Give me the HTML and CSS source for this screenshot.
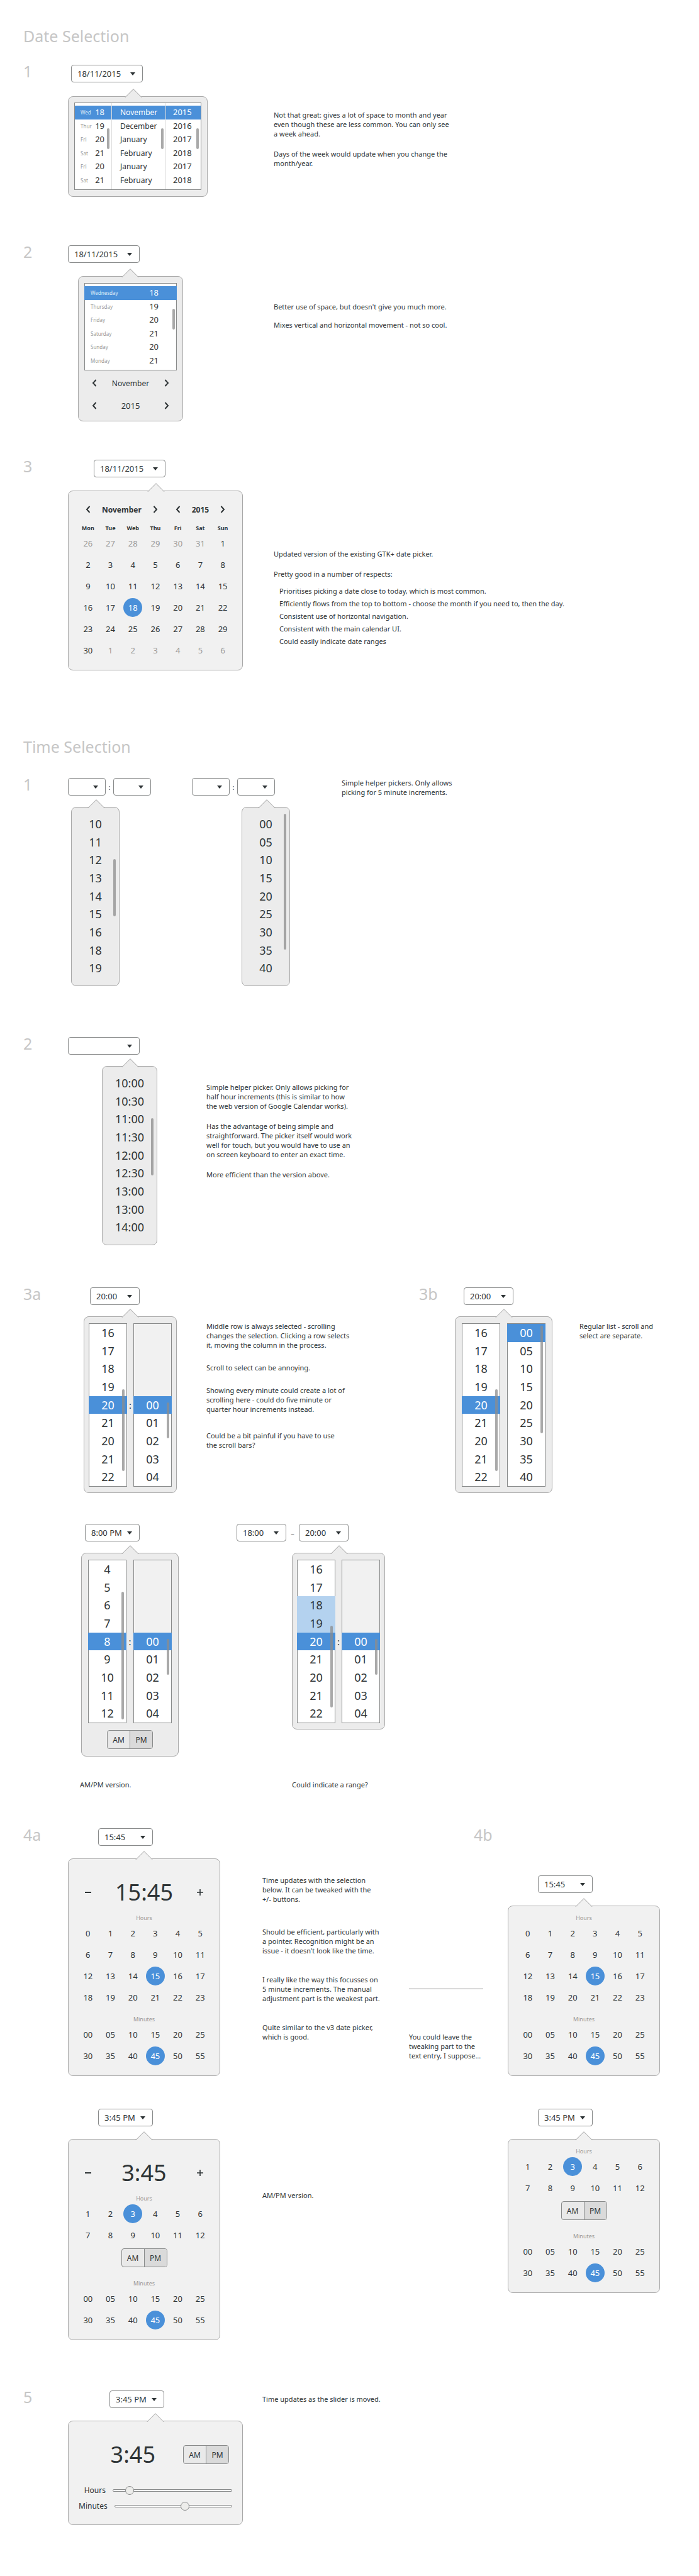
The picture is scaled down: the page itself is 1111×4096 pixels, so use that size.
FILE: index.html
```html
<!DOCTYPE html>
<html lang="en">
<head>
<meta charset="utf-8">
<title>Date and time selection</title>
<link rel="stylesheet" href="styles.css">
</head>
<body>
<svg class="symbols" aria-hidden="true">
  <symbol id="prev" viewBox="0 0 8 12"><path d="M6.5 1 2 6l4.500 5" fill="none" stroke="currentColor" stroke-width="2"/></symbol>
  <symbol id="next" viewBox="0 0 8 12"><path d="M1.500 1 6 6l-4.500 5" fill="none" stroke="currentColor" stroke-width="2"/></symbol>
  <symbol id="minus" viewBox="0 0 10 10"><path d="M0 5h10" stroke="currentColor" stroke-width="2"/></symbol>
  <symbol id="plus" viewBox="0 0 10 10"><path d="M0 5h10M5 0v10" stroke="currentColor" stroke-width="1.600"/></symbol>
</svg>

<main>
<section class="chapter">
  <h1>Date Selection</h1>

  <article class="study study-date">
    <h2>1</h2>
    <div class="picker date-columns">
      <span class="combo wide"><select aria-label="Date"><option>18/11/2015</option></select></span>
      <div class="popover">
        <div class="sheet">
          <ul class="column">
            <li class="on"><small>Wed</small>18</li><li><small>Thur</small>19</li><li><small>Fri</small>20</li><li><small>Sat</small>21</li><li><small>Fri</small>20</li><li><small>Sat</small>21</li>
            <li class="bar" style="top:40px;height:33px"></li>
          </ul>
          <ul class="column months">
            <li class="on">November</li><li>December</li><li>January</li><li>February</li><li>January</li><li>February</li>
            <li class="bar" style="top:40px;height:33px"></li>
          </ul>
          <ul class="column years">
            <li class="on">2015</li><li>2016</li><li>2017</li><li>2018</li><li>2017</li><li>2018</li>
            <li class="bar" style="top:40px;height:33px"></li>
          </ul>
        </div>
      </div>
    </div>
    <div class="notes">
      <p>Not that great: gives a lot of space to month and year<br>even though these are less common. You can only see<br>a week ahead.</p>
      <p>Days of the week would update when you change the<br>month/year.</p>
    </div>
  </article>

  <article class="study study-date second">
    <h2>2</h2>
    <div class="picker date-list">
      <span class="combo wide"><select aria-label="Date"><option>18/11/2015</option></select></span>
      <div class="popover">
        <div class="sheet">
          <ul class="column days">
            <li class="on"><small>Wednesday</small>18</li><li><small>Thursday</small>19</li><li><small>Friday</small>20</li><li><small>Saturday</small>21</li><li><small>Sunday</small>20</li><li><small>Monday</small>21</li>
            <li class="bar" style="top:40px;height:33px"></li>
          </ul>
        </div>
        <div class="stepper">
          <button aria-label="Previous month"><svg class="chevron"><use href="#prev"/></svg></button>
          <span>November</span>
          <button aria-label="Next month"><svg class="chevron"><use href="#next"/></svg></button>
        </div>
        <div class="stepper">
          <button aria-label="Previous year"><svg class="chevron"><use href="#prev"/></svg></button>
          <span class="digits">2015</span>
          <button aria-label="Next year"><svg class="chevron"><use href="#next"/></svg></button>
        </div>
      </div>
    </div>
    <div class="notes">
      <p>Better use of space, but doesn't give you much more.</p>
      <p>Mixes vertical and horizontal movement - not so cool.</p>
    </div>
  </article>

  <article class="study study-date third">
    <h2>3</h2>
    <div class="picker calendar">
      <span class="combo wide"><select aria-label="Date"><option>18/11/2015</option></select></span>
      <div class="popover pale">
        <div class="month-nav">
          <button aria-label="Previous month"><svg class="chevron"><use href="#prev"/></svg></button>
          <strong class="month">November</strong>
          <button aria-label="Next month"><svg class="chevron"><use href="#next"/></svg></button>
          <button aria-label="Previous year"><svg class="chevron"><use href="#prev"/></svg></button>
          <strong>2015</strong>
          <button aria-label="Next year"><svg class="chevron"><use href="#next"/></svg></button>
        </div>
        <table class="month-table">
          <thead><tr><th>Mon</th><th>Tue</th><th>Web</th><th>Thu</th><th>Fri</th><th>Sat</th><th>Sun</th></tr></thead>
          <tbody>
            <tr><td><button class="out">26</button></td><td><button class="out">27</button></td><td><button class="out">28</button></td><td><button class="out">29</button></td><td><button class="out">30</button></td><td><button class="out">31</button></td><td><button>1</button></td></tr>
            <tr><td><button>2</button></td><td><button>3</button></td><td><button>4</button></td><td><button>5</button></td><td><button>6</button></td><td><button>7</button></td><td><button>8</button></td></tr>
            <tr><td><button>9</button></td><td><button>10</button></td><td><button>11</button></td><td><button>12</button></td><td><button>13</button></td><td><button>14</button></td><td><button>15</button></td></tr>
            <tr><td><button>16</button></td><td><button>17</button></td><td><button class="picked">18</button></td><td><button>19</button></td><td><button>20</button></td><td><button>21</button></td><td><button>22</button></td></tr>
            <tr><td><button>23</button></td><td><button>24</button></td><td><button>25</button></td><td><button>26</button></td><td><button>27</button></td><td><button>28</button></td><td><button>29</button></td></tr>
            <tr><td><button>30</button></td><td><button class="out">1</button></td><td><button class="out">2</button></td><td><button class="out">3</button></td><td><button class="out">4</button></td><td><button class="out">5</button></td><td><button class="out">6</button></td></tr>
          </tbody>
        </table>
      </div>
    </div>
    <div class="notes">
      <p>Updated version of the existing GTK+ date picker.</p>
      <p>Pretty good in a number of respects:</p>
      <ul>
        <li>Prioritises picking a date close to today, which is most common.</li>
        <li>Efficiently flows from the top to bottom - choose the month if you need to, then the day.</li>
        <li>Consistent use of horizontal navigation.</li>
        <li>Consistent with the main calendar UI.</li>
        <li>Could easily indicate date ranges</li>
      </ul>
    </div>
  </article>
</section>

<section class="chapter time">
  <h1>Time Selection</h1>

  <article class="study study-helpers">
    <h2>1</h2>
    <div class="picker hours-menu">
      <div class="combos">
        <span class="combo small"><select aria-label="Hour"><option></option></select></span>
        <span class="sep">:</span>
        <span class="combo small"><select aria-label="Minute"><option></option></select></span>
      </div>
      <div class="popover">
        <ul class="menu"><li>10</li><li>11</li><li>12</li><li>13</li><li>14</li><li>15</li><li>16</li><li>18</li><li>19</li></ul>
        <span class="bar" style="top:82px;height:91px"></span>
      </div>
    </div>
    <div class="picker minutes-menu">
      <div class="combos">
        <span class="combo small"><select aria-label="Hour"><option></option></select></span>
        <span class="sep">:</span>
        <span class="combo small"><select aria-label="Minute"><option></option></select></span>
      </div>
      <div class="popover">
        <ul class="menu"><li>00</li><li>05</li><li>10</li><li>15</li><li>20</li><li>25</li><li>30</li><li>35</li><li>40</li></ul>
        <span class="bar" style="top:10px;height:216px"></span>
      </div>
    </div>
    <div class="notes">
      <p>Simple helper pickers. Only allows<br>picking for 5 minute increments.</p>
    </div>
  </article>

  <article class="study study-half">
    <h2>2</h2>
    <div class="picker half-menu">
      <span class="combo wide"><select aria-label="Time"><option></option></select></span>
      <div class="popover">
        <ul class="menu"><li>10:00</li><li>10:30</li><li>11:00</li><li>11:30</li><li>12:00</li><li>12:30</li><li>13:00</li><li>13:00</li><li>14:00</li></ul>
        <span class="bar" style="top:82px;height:91px"></span>
      </div>
    </div>
    <div class="notes">
      <p>Simple helper picker. Only allows picking for<br>half hour increments (this is similar to how<br>the web version of Google Calendar works).</p>
      <p>Has the advantage of being simple and<br>straightforward. The picker itself would work<br>well for touch, but you would have to use an<br>on screen keyboard to enter an exact time.</p>
      <p>More efficient than the version above.</p>
    </div>
  </article>

  <article class="study study-wheels">
    <h2>3a</h2>
    <div class="picker wheels">
      <span class="combo"><select aria-label="Time"><option>20:00</option></select></span>
      <div class="popover">
        <div class="pair">
          <ul class="wheel"><li>16</li><li>17</li><li>18</li><li>19</li><li class="on">20</li><li>21</li><li>20</li><li>21</li><li>22</li><li class="bar" style="top:104px;height:130px"></li></ul>
          <span class="sep">:</span>
          <ul class="wheel"><li class="blank"></li><li class="on">00</li><li>01</li><li>02</li><li>03</li><li>04</li><li class="bar" style="top:125px;height:57px"></li></ul>
        </div>
      </div>
    </div>
    <div class="notes">
      <p>Middle row is always selected - scrolling<br>changes the selection. Clicking a row selects<br>it, moving the column in the process.</p>
      <p>Scroll to select can be annoying.</p>
      <p>Showing every minute could create a lot of<br>scrolling here - could do five minute or<br>quarter hour increments instead.</p>
      <p class="apart">Could be a bit painful if you have to use<br>the scroll bars?</p>
    </div>
    <h2>3b</h2>
    <div class="picker wheels roomy">
      <span class="combo"><select aria-label="Time"><option>20:00</option></select></span>
      <div class="popover">
        <div class="pair">
          <ul class="wheel"><li>16</li><li>17</li><li>18</li><li>19</li><li class="on">20</li><li>21</li><li>20</li><li>21</li><li>22</li><li class="bar" style="top:104px;height:130px"></li></ul>
          <ul class="wheel"><li class="on">00</li><li>05</li><li>10</li><li>15</li><li>20</li><li>25</li><li>30</li><li>35</li><li>40</li><li class="bar" style="top:3px;height:171px"></li></ul>
        </div>
      </div>
    </div>
    <div class="notes">
      <p>Regular list - scroll and<br>select are separate.</p>
    </div>
  </article>

  <div class="study study-variants">
    <figure class="picker wheels roomy ampm">
      <span class="combo long"><select aria-label="Time"><option>8:00 PM</option></select></span>
      <div class="popover">
        <div class="pair">
          <ul class="wheel"><li>4</li><li>5</li><li>6</li><li>7</li><li class="on">8</li><li>9</li><li>10</li><li>11</li><li>12</li><li class="bar" style="top:50px;height:203px"></li></ul>
          <span class="sep">:</span>
          <ul class="wheel"><li class="blank"></li><li class="on">00</li><li>01</li><li>02</li><li>03</li><li>04</li><li class="bar" style="top:125px;height:57px"></li></ul>
        </div>
        <div class="toggle"><button>AM</button><button aria-pressed="true">PM</button></div>
      </div>
      <figcaption>AM/PM version.</figcaption>
    </figure>
    <figure class="picker wheels range">
      <div class="combos">
        <span class="combo"><select aria-label="Start"><option>18:00</option></select></span>
        <span class="sep">–</span>
        <span class="combo"><select aria-label="End"><option>20:00</option></select></span>
      </div>
      <div class="popover">
        <div class="pair">
          <ul class="wheel"><li>16</li><li>17</li><li class="within">18</li><li class="within">19</li><li class="on">20</li><li>21</li><li>20</li><li>21</li><li>22</li><li class="bar" style="top:104px;height:130px"></li></ul>
          <span class="sep">:</span>
          <ul class="wheel"><li class="blank"></li><li class="on">00</li><li>01</li><li>02</li><li>03</li><li>04</li><li class="bar" style="top:125px;height:57px"></li></ul>
        </div>
      </div>
      <figcaption>Could indicate a range?</figcaption>
    </figure>
  </div>

  <article class="study study-grid">
    <h2>4a</h2>
    <div class="picker clock">
      <span class="combo long"><select aria-label="Time"><option>15:45</option></select></span>
      <div class="popover pale">
        <div class="readout">
          <button aria-label="Earlier"><svg class="sign"><use href="#minus"/></svg></button>
          <output>15:45</output>
          <button aria-label="Later"><svg class="sign"><use href="#plus"/></svg></button>
        </div>
        <h3>Hours</h3>
        <div class="cells">
          <button>0</button><button>1</button><button>2</button><button>3</button><button>4</button><button>5</button>
          <button>6</button><button>7</button><button>8</button><button>9</button><button>10</button><button>11</button>
          <button>12</button><button>13</button><button>14</button><button class="picked">15</button><button>16</button><button>17</button>
          <button>18</button><button>19</button><button>20</button><button>21</button><button>22</button><button>23</button>
        </div>
        <h3 class="minutes">Minutes</h3>
        <div class="cells">
          <button>00</button><button>05</button><button>10</button><button>15</button><button>20</button><button>25</button>
          <button>30</button><button>35</button><button>40</button><button class="picked">45</button><button>50</button><button>55</button>
        </div>
      </div>
    </div>
    <div class="notes">
      <p>Time updates with the selection<br>below. It can be tweaked with the<br>+/- buttons.</p>
      <p class="far">Should be efficient, particularly with<br>a pointer. Recognition might be an<br>issue - it doesn't look like the time.</p>
      <p>I really like the way this focusses on<br>5 minute increments. The manual<br>adjustment part is the weakest part.</p>
      <p>Quite similar to the v3 date picker,<br>which is good.</p>
    </div>
    <div class="aside">
      <h2>4b</h2>
      <hr>
      <p>You could leave the<br>tweaking part to the<br>text entry, I suppose...</p>
    </div>
    <div class="picker clock lowered">
      <span class="combo long"><select aria-label="Time"><option>15:45</option></select></span>
      <div class="popover pale compact">
        <h3>Hours</h3>
        <div class="cells">
          <button>0</button><button>1</button><button>2</button><button>3</button><button>4</button><button>5</button>
          <button>6</button><button>7</button><button>8</button><button>9</button><button>10</button><button>11</button>
          <button>12</button><button>13</button><button>14</button><button class="picked">15</button><button>16</button><button>17</button>
          <button>18</button><button>19</button><button>20</button><button>21</button><button>22</button><button>23</button>
        </div>
        <h3 class="minutes">Minutes</h3>
        <div class="cells">
          <button>00</button><button>05</button><button>10</button><button>15</button><button>20</button><button>25</button>
          <button>30</button><button>35</button><button>40</button><button class="picked">45</button><button>50</button><button>55</button>
        </div>
      </div>
    </div>
  </article>

  <div class="study study-grid-ampm">
    <div class="picker clock">
      <span class="combo long"><select aria-label="Time"><option>3:45 PM</option></select></span>
      <div class="popover pale">
        <div class="readout">
          <button aria-label="Earlier"><svg class="sign"><use href="#minus"/></svg></button>
          <output>3:45</output>
          <button aria-label="Later"><svg class="sign"><use href="#plus"/></svg></button>
        </div>
        <h3>Hours</h3>
        <div class="cells">
          <button>1</button><button>2</button><button class="picked">3</button><button>4</button><button>5</button><button>6</button>
          <button>7</button><button>8</button><button>9</button><button>10</button><button>11</button><button>12</button>
        </div>
        <div class="toggle"><button>AM</button><button aria-pressed="true">PM</button></div>
        <h3 class="after-toggle">Minutes</h3>
        <div class="cells">
          <button>00</button><button>05</button><button>10</button><button>15</button><button>20</button><button>25</button>
          <button>30</button><button>35</button><button>40</button><button class="picked">45</button><button>50</button><button>55</button>
        </div>
      </div>
    </div>
    <div class="notes">
      <p>AM/PM version.</p>
    </div>
    <div class="picker clock">
      <span class="combo long"><select aria-label="Time"><option>3:45 PM</option></select></span>
      <div class="popover pale compact">
        <h3>Hours</h3>
        <div class="cells">
          <button>1</button><button>2</button><button class="picked">3</button><button>4</button><button>5</button><button>6</button>
          <button>7</button><button>8</button><button>9</button><button>10</button><button>11</button><button>12</button>
        </div>
        <div class="toggle"><button>AM</button><button aria-pressed="true">PM</button></div>
        <h3 class="after-toggle">Minutes</h3>
        <div class="cells">
          <button>00</button><button>05</button><button>10</button><button>15</button><button>20</button><button>25</button>
          <button>30</button><button>35</button><button>40</button><button class="picked">45</button><button>50</button><button>55</button>
        </div>
      </div>
    </div>
  </div>

  <article class="study study-sliders">
    <h2>5</h2>
    <div class="picker sliders">
      <span class="combo long"><select aria-label="Time"><option>3:45 PM</option></select></span>
      <div class="popover pale">
        <div class="summary">
          <output>3:45</output>
          <div class="toggle"><button>AM</button><button aria-pressed="true">PM</button></div>
        </div>
        <div class="slider"><label for="hours">Hours</label><input id="hours" type="range" min="0" max="100" value="11"></div>
        <div class="slider"><label for="minutes">Minutes</label><input id="minutes" type="range" min="0" max="100" value="61"></div>
      </div>
    </div>
    <div class="notes">
      <p>Time updates as the slider is moved.</p>
    </div>
  </article>
</section>
</main>
</body>
</html>
```
FILE: styles.css
```css
:root {
  --ink: #2e3436;
  --line: #888a8a;
  --edge: #a8a8a8;
  --blue: #4a90d9;
  --popover: #ececec;
}

* { box-sizing: border-box; }

body {
  margin: 0;
  background: #fff;
  color: var(--ink);
  font: 11px/15px "Noto Sans", "Open Sans", sans-serif;
}

main { padding: 41px 0 82px 37px; }

h1, h2, h3, p, ul, figure { margin: 0; padding: 0; }
ul { list-style: none; }

h1, h2 {
  color: #c6c6c6;
  font-size: 25px;
  font-weight: 400;
}
h1 { line-height: 32px; margin-bottom: 30px; }
h2 { line-height: 20px; }

button, select, input { font: inherit; color: inherit; margin: 0; }
button { padding: 0; border: 0; background: none; }

.symbols { display: none; }
.chevron { display: block; width: 8px; height: 12px; }
.sign { display: block; width: 10px; height: 10px; }

/* Page rhythm */

.chapter.time { margin-top: 105px; }
.chapter.time h1 { margin-bottom: 34px; }

.study { display: grid; align-items: start; }
.study-date { grid-template-columns: 71px 327px 1fr; }
.study-date.second { margin-top: 77px; }
.study-date.third { margin-top: 61px; }
.study-helpers { grid-template-columns: 71px 197px 238px 1fr; }
.study-half { grid-template-columns: 71px 220px 1fr; margin-top: 81px; }
.study-wheels { grid-template-columns: 71px 220px 338px 57px 198px 1fr; margin-top: 67px; }
.study-variants { grid-template-columns: 268px 1fr; align-items: stretch; padding-left: 71px; margin-top: 49px; }
.study-grid { grid-template-columns: 71px 309px 233px 157px 1fr; margin-top: 62px; }
.study-grid-ampm { grid-template-columns: 309px 390px 1fr; padding-left: 71px; margin-top: 52px; }
.study-sliders { grid-template-columns: 71px 309px 1fr; margin-top: 80px; }

/* Notes */

.notes { white-space: nowrap; }
.notes p + p { margin-top: 17px; }
.study-date .notes { padding-top: 72px; }
.second .notes { padding-top: 90px; }
.second .notes p + p { margin-top: 14px; }
.third .notes { padding-top: 142px; }
.notes ul { margin: 10px 0 0 9px; line-height: 20px; }
.study-half .notes { padding-top: 72px; }
.study-wheels .notes { padding-top: 54px; }
.study-wheels .notes p + p { margin-top: 21px; }
.study-wheels .notes p.apart { margin-top: 27px; }
.study-grid .notes { padding-top: 75px; }
.study-grid .notes p + p { margin-top: 31px; }
.study-grid .notes p.far { margin-top: 37px; }
.study-grid-ampm .notes { padding-top: 130px; }
.study-sliders .notes { padding-top: 6px; }

.aside { white-space: nowrap; }
.aside h2 { padding-left: 103px; }
.aside hr { width: 118px; margin: 235px 0 68px; border: 0; border-top: 1px solid var(--line); }

/* Drop-down entries */

.picker { display: flex; flex-direction: column; align-items: flex-start; }
.combos { display: flex; align-items: center; }
.combos .sep { width: 12px; text-align: center; }

.combo { position: relative; display: block; width: 79px; height: 28px; }
.combo.wide { width: 114px; }
.combo.long { width: 87px; }
.combo.small { width: 60px; }
.combo select {
  appearance: none;
  display: block;
  width: 100%;
  height: 100%;
  padding: 0 0 0 9px;
  border: 1px solid var(--line);
  border-radius: 4px;
  background: #fff;
  font-size: 13px;
}
.combo::after {
  content: "";
  position: absolute;
  top: 12px;
  right: 12px;
  border: 4px solid transparent;
  border-top: 5px solid var(--ink);
  border-bottom: 0;
}

/* Popovers */

.popover {
  position: relative;
  margin-top: 18px;
  border: 1px solid var(--edge);
  border-radius: 8px;
  background: var(--popover);
}
.popover::before {
  content: "";
  position: absolute;
  top: -9px;
  left: calc(var(--tip) - 10px);
  width: 18px;
  height: 18px;
  border: 1px solid var(--edge);
  background: inherit;
  transform: rotate(45deg);
  clip-path: polygon(0 0, 100% 0, 0 100%);
}
.popover.pale { background: #f1f1f1; margin-top: 20px; }

.bar {
  position: absolute;
  right: 3px;
  width: 4px;
  border-radius: 2px;
  background: rgba(140, 140, 140, .75);
}

/* Date lists */

.date-columns .combo { margin-left: 5px; }
.date-columns .popover { --tip: 103px; width: 222px; margin-top: 22px; padding: 9px 9px 10px; }
.date-list .popover { --tip: 82px; width: 167px; margin: 21px 0 0 16px; padding: 10px 9px 6px; }

.sheet { display: flex; height: 139px; border: 1px solid var(--line); background: #fff; }
.column {
  position: relative;
  display: grid;
  grid-template-rows: repeat(6, 1fr);
  width: 59px;
  padding: 4px 0;
  border-right: 1px solid #ddd;
  font-size: 13px;
}
.column li:not(.bar) { display: flex; align-items: center; justify-content: space-between; padding: 0 11px 0 9px; }
.column.months { width: 86px; font-size: 12px; }
.column.months li:not(.bar) { padding-left: 13px; }
.column.years { flex: 1; border-right: 0; }
.column.years li:not(.bar) { padding-left: 11px; }
.column small { color: #999; font-size: 8px; }
.column .on, .wheel .on { background: var(--blue); color: #fff; }
.column .on small { color: #dcebf8; }
.column.days { flex: 1; margin: 0 -1px; border-right: 0; }
.column.days li:not(.bar) { padding: 0 29px 0 10px; }

.stepper {
  display: flex;
  align-items: center;
  justify-content: space-between;
  height: 36px;
  padding: 0 12px;
  font-size: 12px;
}
.sheet + .stepper { margin-top: 2px; }
.stepper .digits { font-size: 13px; }

/* Calendar */

.calendar .combo { margin-left: 41px; }
.calendar .popover { --tip: 139px; width: 278px; margin-top: 21px; padding: 9px 13px 14px; }
.month-nav {
  display: grid;
  grid-template-columns: repeat(7, 1fr);
  height: 40px;
  place-items: center;
  font-size: 12px;
}
.month-nav .month { grid-column: span 2; }
.month-table { width: 100%; table-layout: fixed; border-collapse: collapse; text-align: center; }
.month-table th { height: 17px; padding: 2px 0 0; font-size: 9px; line-height: 15px; }
.month-table td { height: 34px; padding: 0; }
.month-table button, .cells button {
  width: 30px;
  height: 30px;
  border-radius: 50%;
  font-size: 13px;
  line-height: 30px;
}
.month-table button { display: block; margin: 0 auto; }
.month-table .out { color: #999; }
.month-table .picked, .cells .picked { background: var(--blue); color: #fff; }

/* Plain menus */

.hours-menu .popover { --tip: 39px; width: 77px; margin-left: 5px; }
.minutes-menu .popover { --tip: 39px; width: 77px; margin-left: 79px; }
.half-menu .popover { --tip: 44px; width: 88px; margin-left: 54px; }
.menu, .wheel {
  display: grid;
  grid-template-rows: repeat(9, 1fr);
  font-size: 18px;
  line-height: 28px;
  text-align: center;
}
.menu { height: 283px; padding: 12px 0 13px; }
.menu + .bar { right: 5px; }

/* Hour and minute wheels */

.wheels > .combo { margin-left: 35px; }
.wheels .popover { --tip: 73px; width: 148px; margin-left: 25px; padding: 10px 7px 9px; }
.pair { display: flex; align-items: center; justify-content: space-between; }
.pair .sep { width: 10px; text-align: center; font-size: 15px; }
.wheel {
  position: relative;
  width: 61px;
  height: 260px;
  border: 1px solid var(--line);
  background: #fff;
}
.wheel .on, .wheel .within { margin: 0 -1px; }
.wheel .within { background: #b4d2ef; }
.wheel .blank { grid-row: span 4; background: #f1f1f1; }

.wheels.roomy > .combo { margin-left: 14px; }
.wheels.roomy .popover { --tip: 77px; width: 155px; margin-left: 0; padding: 10px; }
.wheels.roomy .popover { padding-bottom: 9px; }
.wheels.ampm > .combo { margin-left: 27px; }
.wheels.ampm .popover { margin-left: 21px; padding-bottom: 11px; }
.wheels.ampm figcaption { margin-left: 19px; }
.wheels.range .popover { --tip: 74px; margin-left: 88px; }
.wheels.range .combos .sep { width: 20px; color: #777; }
.wheels.range figcaption { margin-left: 88px; }
.study-variants .popover { margin-bottom: 37px; }
figcaption { margin-top: auto; }

.toggle {
  display: flex;
  width: 73px;
  height: 30px;
  margin: 0 auto;
  overflow: hidden;
  border: 1px solid var(--line);
  border-radius: 4px;
  background: #e9e9e9;
}
.toggle button { flex: 1; font-size: 12px; }
.toggle [aria-pressed] { border-left: 1px solid var(--line); background: #dadada; }
.pair + .toggle { margin-top: 11px; }

/* Clock grids */

.clock .combo { margin-left: 48px; }
.clock.lowered { margin-top: 75px; }
.clock .popover { --tip: 120px; width: 242px; padding: 19px 13px 14px; }
.clock .popover.compact { padding-top: 12px; }
.readout { display: grid; grid-template-columns: repeat(6, 1fr); height: 68px; place-items: center; }
.readout output { grid-column: span 4; }
output { font-size: 36px; line-height: 40px; }
h3 { color: #999; font-size: 9px; font-weight: 400; line-height: 14px; text-align: center; }
h3.minutes { padding-top: 11px; }
h3.after-toggle { margin-top: 19px; }
.cells { display: grid; grid-template-columns: repeat(6, 1fr); grid-auto-rows: 34px; place-items: center; }
.cells + .toggle { margin-top: 4px; }

/* Sliders */

.sliders > .combo { margin-left: 66px; }
.sliders .popover { --tip: 138px; width: 278px; padding: 19px 16px 17px; }
.summary { display: flex; align-items: center; justify-content: flex-end; gap: 44px; height: 68px; margin-bottom: 10px; padding-right: 5px; }
.summary .toggle { margin: 0; }
.slider { display: flex; align-items: center; justify-content: flex-end; gap: 11px; height: 25px; font-size: 12px; }
.slider input { appearance: none; width: 190px; height: 14px; background: none; }
.slider input::-webkit-slider-runnable-track {
  height: 4px;
  border: 1px solid var(--line);
  border-radius: 2px;
  background: #fff;
}
.slider input::-webkit-slider-thumb {
  appearance: none;
  width: 14px;
  height: 14px;
  margin-top: -6px;
  border: 1px solid var(--line);
  border-radius: 50%;
  background: #ededeb;
}
```
